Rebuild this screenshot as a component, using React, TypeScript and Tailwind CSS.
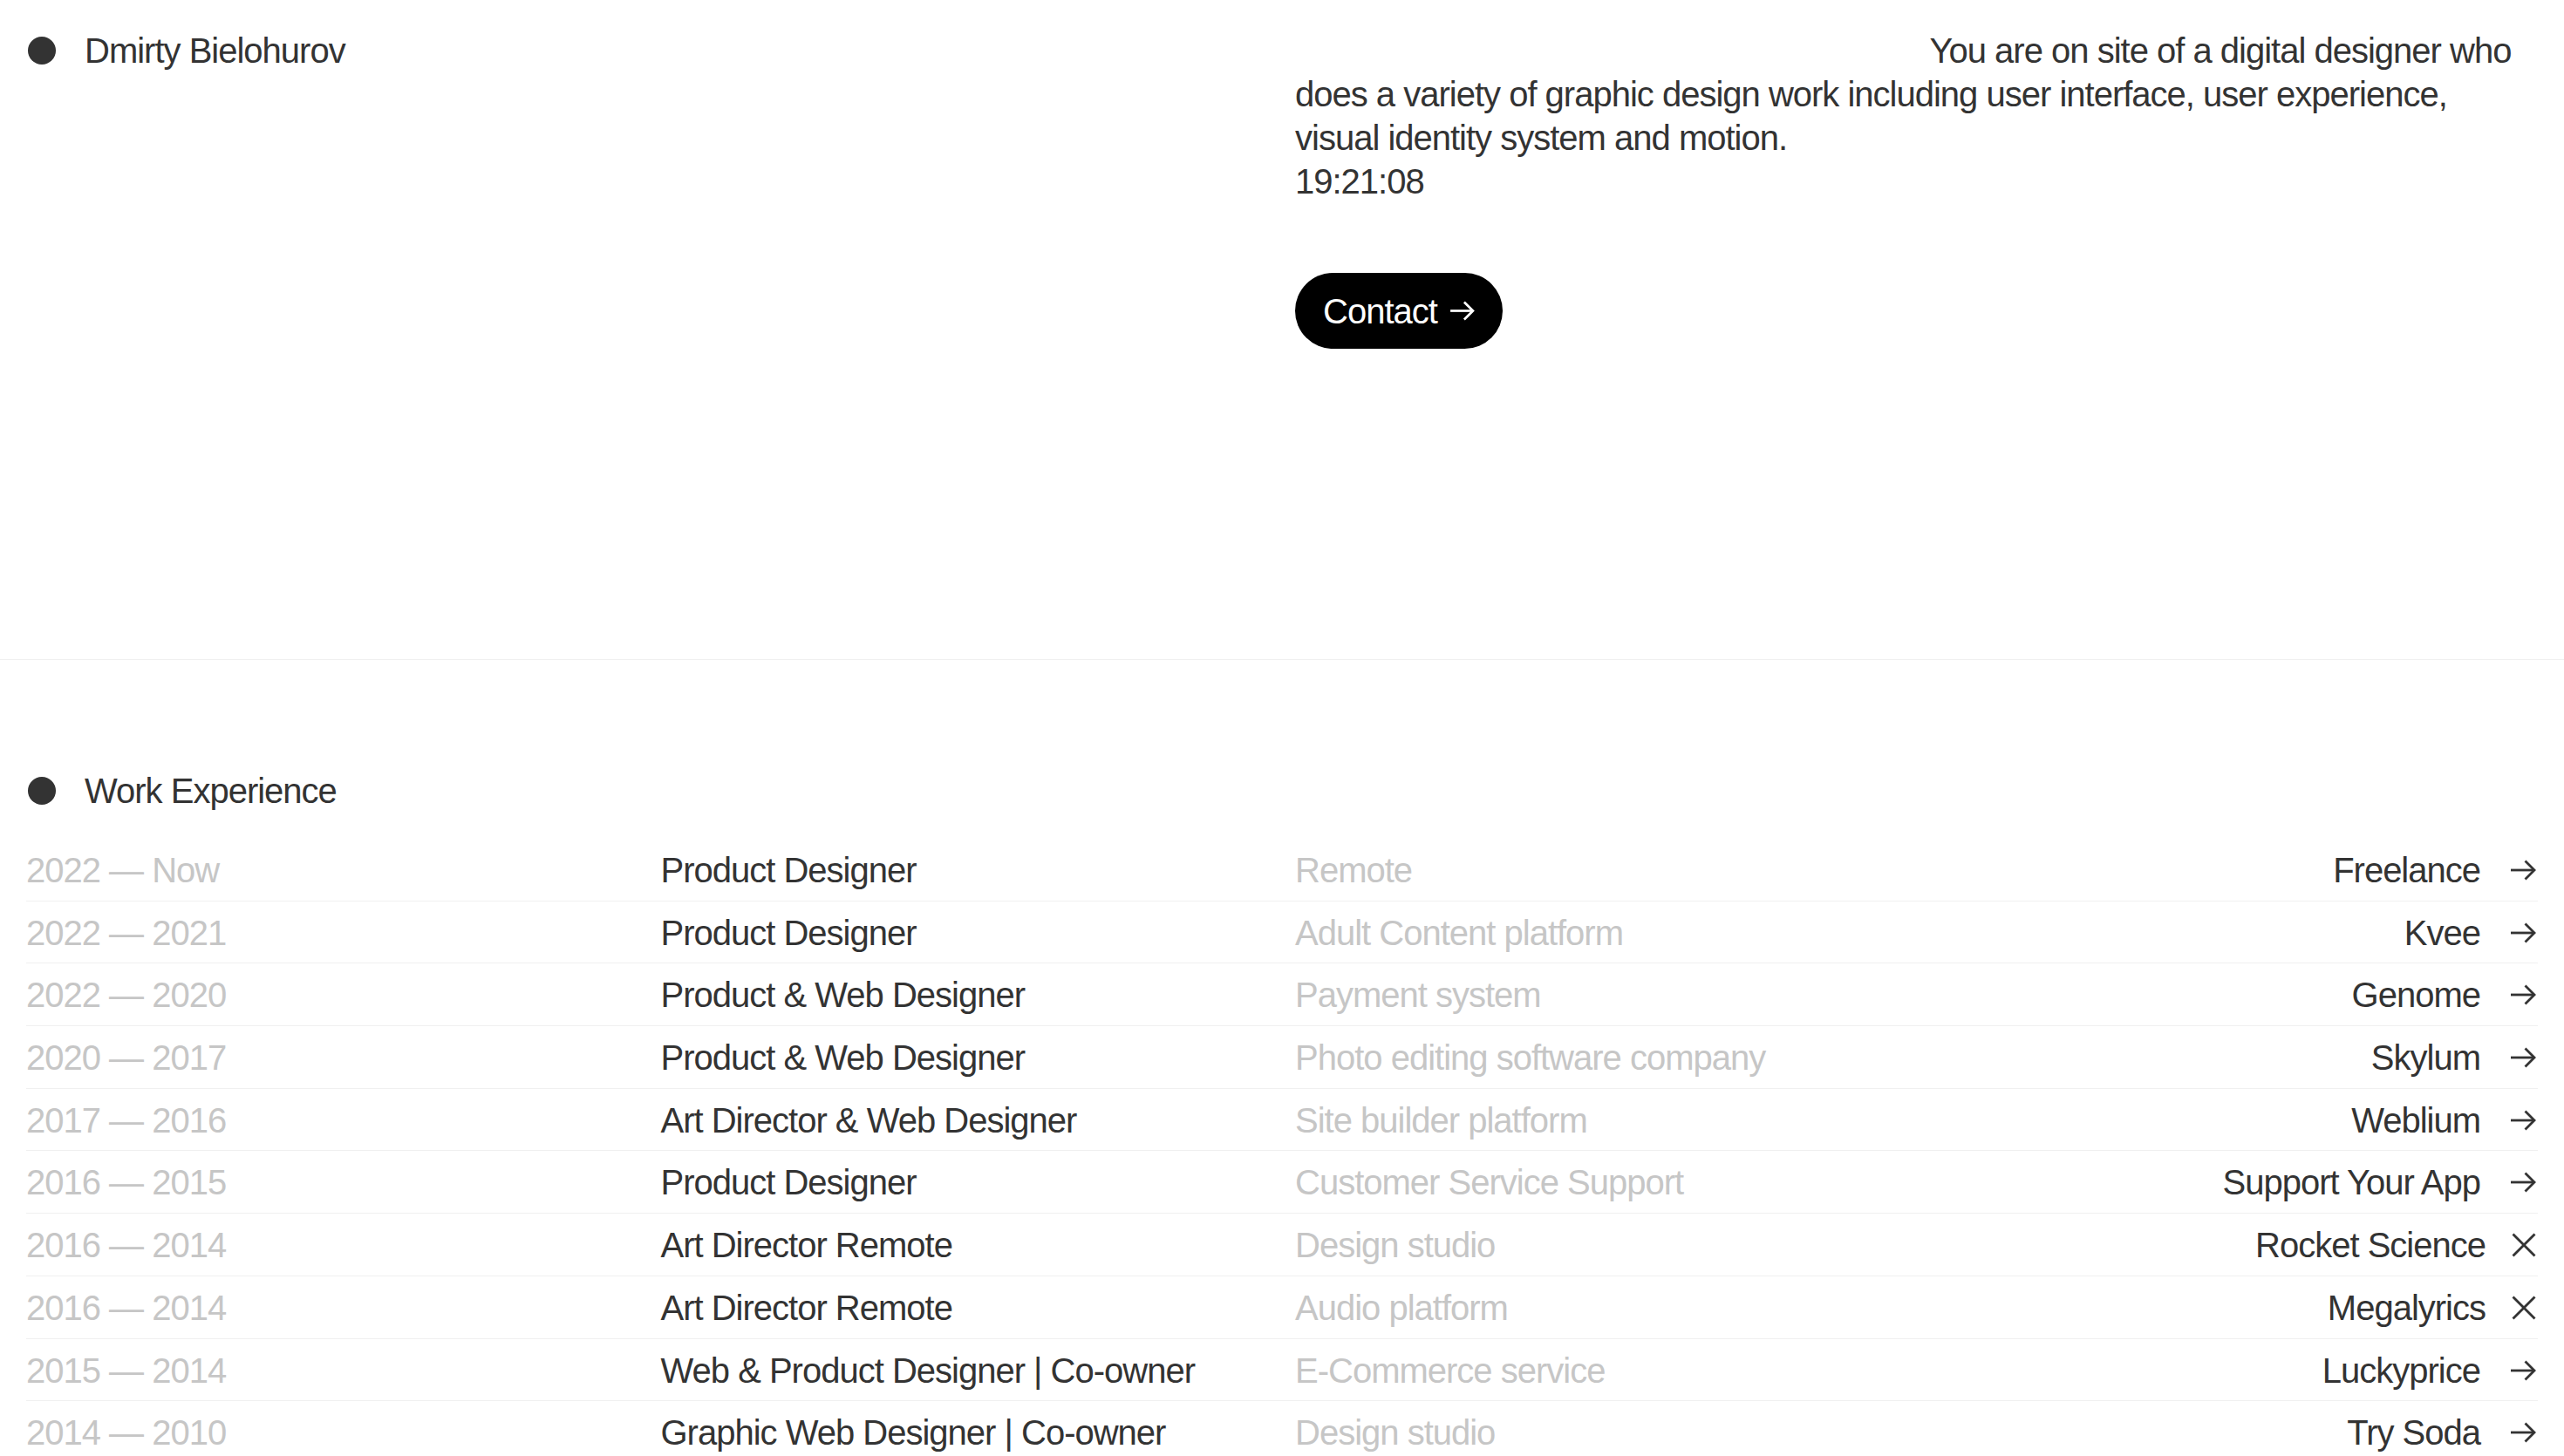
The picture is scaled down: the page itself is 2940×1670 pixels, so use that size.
import type React from "react";

interface Job {
	years: string;
	role: string;
	area: string;
	company: string;
	closed?: boolean;
}

const jobs: Job[] = [
	{ years: "2022 — Now", role: "Product Designer", area: "Remote", company: "Freelance" },
	{ years: "2022 — 2021", role: "Product Designer", area: "Adult Content platform", company: "Kvee" },
	{ years: "2022 — 2020", role: "Product & Web Designer", area: "Payment system", company: "Genome" },
	{ years: "2020 — 2017", role: "Product & Web Designer", area: "Photo editing software company", company: "Skylum" },
	{ years: "2017 — 2016", role: "Art Director & Web Designer", area: "Site builder platform", company: "Weblium" },
	{ years: "2016 — 2015", role: "Product Designer", area: "Customer Service Support", company: "Support Your App" },
	{ years: "2016 — 2014", role: "Art Director Remote", area: "Design studio", company: "Rocket Science", closed: true },
	{ years: "2016 — 2014", role: "Art Director Remote", area: "Audio platform", company: "Megalyrics", closed: true },
	{ years: "2015 — 2014", role: "Web & Product Designer | Co-owner", area: "E-Commerce service", company: "Luckyprice" },
	{ years: "2014 — 2010", role: "Graphic Web Designer | Co-owner", area: "Design studio", company: "Try Soda" },
];

function Arrow({ className = "" }: { className?: string }) {
	return (
		<svg
			width="30"
			height="24"
			viewBox="0 0 30 24"
			fill="none"
			stroke="currentColor"
			strokeWidth="2.8"
			className={className}
		>
			<path d="M1 12h27" />
			<path d="M17.5 1.5 28 12 17.5 22.5" />
		</svg>
	);
}

function Cross() {
	return (
		<svg
			width="28"
			height="28"
			viewBox="0 0 28 28"
			fill="none"
			stroke="currentColor"
			strokeWidth="2.8"
			className="mr-[2px] ml-[-4px]"
		>
			<path d="M1.5 1.5 26.5 26.5" />
			<path d="M26.5 1.5 1.5 26.5" />
		</svg>
	);
}

function Label({ children }: { children: React.ReactNode }) {
	return (
		<div className="flex items-center gap-[33px] pl-[2px] self-start">
			<span className="w-[32px] h-[32px] rounded-full bg-[#333333]" />
			<span>{children}</span>
		</div>
	);
}

export default function App() {
	return (
		<div className="min-h-screen bg-white text-[#333333] font-['Liberation_Sans',Arial,sans-serif] text-[40px] leading-[50px] tracking-[-0.025em]">
			<section className="h-[757px] border-b border-[#f0f0f0] pt-[33px]">
				<div className="grid grid-cols-4 items-start gap-x-[30px] px-[30px]">
					<Label>Dmirty Bielohurov</Label>
					<div />
					<div className="col-span-2">
						<p className="indent-[727.5px]">
							You are on site of a digital designer who does a variety of
							graphic design work including user interface, user experience,
							visual identity system and motion.
						</p>
						<div>19:21:08</div>
						<button
							type="button"
							className="mt-[80px] h-[87px] px-[32px] flex items-center gap-[14px] rounded-full bg-black text-white"
						>
							Contact
							<Arrow className="w-[29px] h-[23px]" />
						</button>
					</div>
				</div>
			</section>

			<section className="pt-[125px] px-[30px]">
				<Label>Work Experience</Label>
				<div className="mt-[30px]">
					{jobs.map((job, i) => (
						<div
							key={i}
							className="grid grid-cols-4 gap-x-[30px] pt-[11px] pb-[9.7px] border-b border-[#f0f0f0]"
						>
							<div className="text-[#c6c6c6]">{job.years}</div>
							<div>{job.role}</div>
							<div className="text-[#c6c6c6]">{job.area}</div>
							<div className="flex items-center justify-end gap-[34px]">
								<span>{job.company}</span>
								{job.closed ? <Cross /> : <Arrow className="mr-[2px]" />}
							</div>
						</div>
					))}
				</div>
			</section>
		</div>
	);
}
